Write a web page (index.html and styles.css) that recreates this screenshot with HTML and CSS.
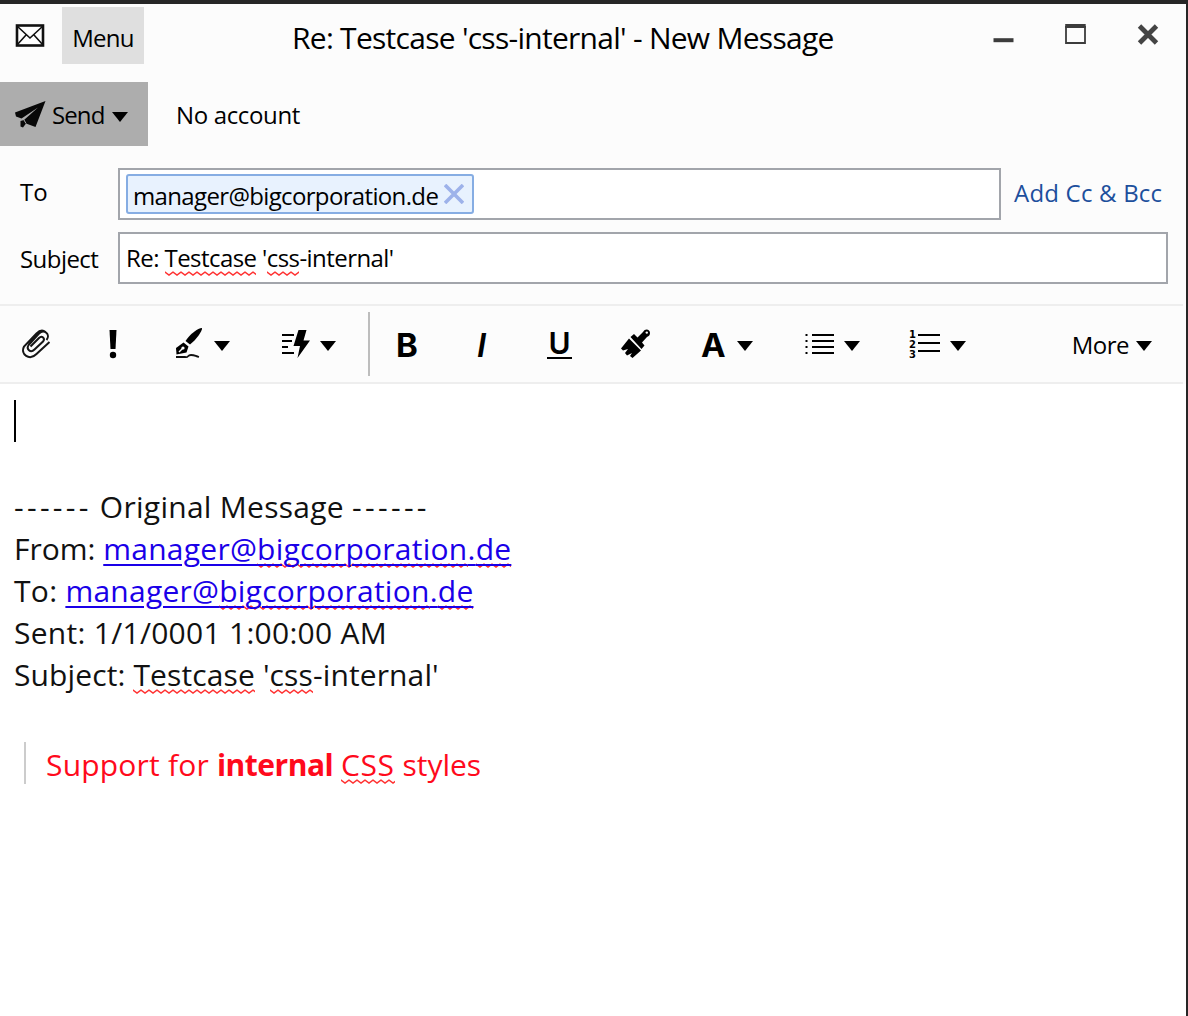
FILE: index.html
```html
<!DOCTYPE html>
<html lang="en">
<head>
<meta charset="utf-8">
<title>Re: Testcase 'css-internal' - New Message</title>
<link rel="stylesheet" href="styles.css">
</head>
<body>
<div class="window">
  <header class="titlebar">
    <svg class="mail-icon" viewBox="0 0 30 24" width="30" height="24"><rect x="2" y="1.500" width="26" height="20" fill="#fff" stroke="#111" stroke-width="2.6"/><path d="M2 2l13 12L28 2M2 21l9-10M28 21l-9-10" fill="none" stroke="#111" stroke-width="1.6"/></svg>
    <button class="menu-button"><span class="t t-menu">Menu</span></button>
    <h1 class="title"><span class="t t-title">Re: Testcase 'css-internal' - New Message</span></h1>
    <div class="controls">
      <svg width="22" height="24" viewBox="0 0 22 24"><path d="M0.500 15.200h20v4H.5z" fill="#3c3c3c"/></svg>
      <svg width="22" height="24" viewBox="0 0 22 24"><path d="M1 3v17h19V3" fill="none" stroke="#3c3c3c" stroke-width="1.800"/><path d="M0.200 1h20.500v4H.2z" fill="#3c3c3c"/></svg>
      <svg width="22" height="24" viewBox="0 0 22 24"><path d="M2.500 3l17 17M19.500 3l-17 17" stroke="#444" stroke-width="4.800"/></svg>
    </div>
  </header>

  <div class="actions">
    <button class="send-button">
      <svg width="31" height="27" viewBox="0 0 31 27"><path d="M30.500 0L0 11.500l1 4 5.500 2L23 6.500 9 19l-3.500 1v5.500l2.500 1 3-4 9.500 3.500z" fill="#080808"/><path d="M9 19l2 3.500" stroke="#adadad"/></svg>
      <span class="t t-send">Send</span>
      <svg class="caret" width="16" height="10" viewBox="0 0 16 10"><path d="M0 0h16L8 10z"/></svg>
    </button>
    <span class="t t-account">No account</span>
  </div>

  <form class="fields">
    <label class="label"><span class="t t-to">To</span></label>
    <div class="to-row">
      <div class="field field-to">
        <span class="chip"><span class="t t-chip">manager@bigcorporation.de</span><svg width="20" height="20" viewBox="0 0 20 20"><path d="M1 1l18 18M19 1L1 19" stroke="#9db2ea" stroke-width="3.600"/></svg></span>
      </div>
      <a class="add-cc"><span class="t t-cc">Add Cc &amp; Bcc</span></a>
    </div>
    <label class="label label-subject"><span class="t t-subject">Subject</span></label>
    <div class="field field-subject"><span class="t t-value">Re: <span class="sp sp-tight">Testcase</span> '<span class="sp">css</span>-internal'</span></div>
  </form>

  <nav class="toolbar">
    <span class="tool"><svg width="29" height="30" viewBox="0 0 29 30"><path d="M8.500 17.500L17 9c3-3 6.500.5 4 3.500L12.500 20.500c-4 4-9-.5-5.500-5L17 4.500c5-5 12 1 7.500 6.500M27.500 13L14.500 25C7.500 32-2 25.500 2 17.500L14.500 4.500c3-3 6.500-3.500 9-1.500" fill="none" stroke="#161616" stroke-width="2"/></svg></span>
    <span class="tool"><svg width="17" height="30" viewBox="0 0 17 30"><path d="M4.500 1h7L10.500 20h-5z"/><circle cx="8" cy="26" r="3.200"/></svg></span>
    <span class="tool tool-pen"><svg width="29" height="32" viewBox="0 0 29 32"><path d="M27 0c.5 3-6 12-12 16.500L10.500 13C15 6 23 0 27 0z"/><path d="M8.500 14.500l5 4-2 6-10 2L1 20z"/><path d="M4 24l4-4" stroke="#fcfcfc" stroke-width="1.500"/><circle cx="8" cy="20" r="1.600" fill="#fcfcfc"/><path d="M1 29h9c4 .8 2-2 6-2s4 1 8 2" fill="none" stroke="#111" stroke-width="1.800"/></svg><svg class="caret" width="16" height="10" viewBox="0 0 16 10"><path d="M0 0h16L8 10z"/></svg></span>
    <span class="tool"><svg width="29" height="30" viewBox="0 0 29 30"><path d="M1 6h12M1 12h10M1 18h6M1 24h12" stroke="#000" stroke-width="2.200"/><path d="M17.500 1h8l-3 10.500H29L16.500 29l2.500-12h-6.500z"/></svg><svg class="caret" width="16" height="10" viewBox="0 0 16 10"><path d="M0 0h16L8 10z"/></svg></span>
    <span class="separator"></span>
    <span class="tool glyph bold">B</span>
    <span class="tool glyph italic">I</span>
    <span class="tool glyph"><span class="underlined">U</span></span>
    <span class="tool"><svg width="30" height="30" viewBox="0 0 30 30"><path d="M9.500 8l3.500-3 3.500 3.500L22 3c2-4 7-3 7 1 0 2-1 3-3 4l-5 5.500 2.500 3L20.500 20z"/><path d="M8 9.500l12 12L11.500 29 9 27l2-3-5 2.500L4 24l3-4-5 1.500L0 19.500z"/><circle cx="25.800" cy="3.600" r="1.200" fill="#fcfcfc"/></svg></span>
    <span class="tool glyph color"><span class="letter">A</span><svg class="caret" width="16" height="10" viewBox="0 0 16 10"><path d="M0 0h16L8 10z"/></svg></span>
    <span class="tool"><svg width="29" height="30" viewBox="0 0 29 30"><path d="M7 6h22M7 12h22M7 18h22M7 24h22" stroke="#000" stroke-width="2.200"/><path d="M.5 6h2M.5 12h2M.5 18h2M.5 24h2" stroke="#000" stroke-width="2.200"/></svg><svg class="caret" width="16" height="10" viewBox="0 0 16 10"><path d="M0 0h16L8 10z"/></svg></span>
    <span class="tool"><svg class="numbers" width="31" height="30" viewBox="0 0 31 30"><text x="0" y="9">1</text><text x="0" y="19">2</text><text x="0" y="29">3</text><path d="M9 6h22M9 14h22M9 22h22" stroke="#000" stroke-width="2.200"/></svg><svg class="caret" width="16" height="10" viewBox="0 0 16 10"><path d="M0 0h16L8 10z"/></svg></span>
    <span class="tool more"><span class="t t-more">More</span><svg class="caret" width="16" height="10" viewBox="0 0 16 10"><path d="M0 0h16L8 10z"/></svg></span>
  </nav>

  <main class="editor">
    <div class="cursor-line"><span class="cursor"></span></div>
    <div class="line"></div>
    <div class="line"><span class="dashes">------</span><span class="origin"> Original Message </span><span class="dashes">------</span></div>
    <div class="line">From: <a class="address">manager@<span class="sp">bigcorporation</span>.<span class="sp">de</span></a></div>
    <div class="line"><span class="wide">To: </span><a class="address">manager@<span class="sp">bigcorporation</span>.<span class="sp">de</span></a></div>
    <div class="line wide">Sent: 1/1/0001 1:00:00 AM</div>
    <div class="line subject-line">Subject: <span class="sp">Testcase</span> '<span class="sp">css</span>-internal'</div>
    <blockquote class="quote"><span class="support">Support for </span><strong>internal</strong> <span class="sp caps">CSS</span> styles</blockquote>
  </main>
</div>
</body>
</html>
```
FILE: styles.css
```css
* { box-sizing: border-box; }
body {
  margin: 0;
  background: #262626;
  font-family: "Open Sans", "Noto Sans", sans-serif;
  font-size: 24px;
  color: #000;
}
button { border: 0; padding: 0; font: inherit; color: inherit; }
svg { display: block; flex: none; }
.t { white-space: pre; }
.t-menu { letter-spacing: -.7px; }
.t-title { letter-spacing: -.73px; }
.t-send { letter-spacing: -.9px; }
.t-account { letter-spacing: -.35px; }
.t-chip { letter-spacing: -.65px; }
.t-cc { letter-spacing: .2px; }
.t-subject { letter-spacing: -.55px; }
.t-value { letter-spacing: -.57px; }
.t-more { letter-spacing: -.5px; }

.window {
  height: 1016px;
  border-top: 4px solid #262626;
  border-right: 2px solid #262626;
  background: #fcfcfc;
  display: flex;
  flex-direction: column;
  overflow: hidden;
}

.titlebar {
  flex: none;
  height: 78px;
  padding: 3px 27px 0 15px;
  display: flex;
  align-items: flex-start;
}
.mail-icon { margin-top: 17px; }
.menu-button {
  width: 82px;
  height: 57px;
  margin-left: 17px;
  background: #dfdfdf;
  padding-top: 4px;
}
.title {
  flex: 1;
  margin: 0 0 0 148px;
  font-size: 30px;
  font-weight: 400;
  line-height: 62px;
}
.controls { display: flex; gap: 50px; padding-top: 16px; }

.actions { flex: none; height: 64px; display: flex; align-items: center; gap: 28px; }
.send-button {
  width: 148px;
  height: 64px;
  padding-left: 15px;
  background: #adadad;
  display: flex;
  align-items: center;
  gap: 6px;
}
.send-button .caret { margin: 5px 0 0 2px; }

.fields {
  flex: none;
  display: grid;
  grid-template-columns: 98px 1050px;
  grid-template-rows: 52px 52px;
  row-gap: 12px;
  padding: 22px 0 0 20px;
}
.label { line-height: 48px; }
.label-subject { line-height: 54px; }
.to-row { display: flex; align-items: center; gap: 13px; }
.field {
  height: 52px;
  background: #fff;
  border: 2px solid #a2a5ab;
  padding: 4px 6px;
}
.field-to { width: 883px; }
.field-subject { line-height: 40px; }
.field-subject .sp { padding-bottom: 3px; }
.chip {
  display: inline-flex;
  align-items: center;
  gap: 6px;
  width: 348px;
  height: 40px;
  padding: 2px 0 0 5px;
  background: #e8f2fe;
  border: 2px solid #86ade3;
  border-radius: 3px;
}
.chip svg { margin-top: -2px; }
.add-cc { color: #1d4f9c; padding-bottom: 3px; }

.toolbar {
  flex: none;
  height: 80px;
  margin: 20px 3px 0 0;
  padding-left: 22px;
  border-top: 2px solid #eee;
  border-bottom: 2px solid #eee;
  display: grid;
  grid-template-columns: 83px 70px 106px 87px 28px 80px 71px 74px 80px 104px 104px 1fr auto;
  align-items: center;
}
.tool { display: flex; align-items: center; gap: 10px; }
.tool .caret { margin-top: 4px; }
.more { gap: 7px; padding-right: 31px; }
.separator { width: 2px; height: 64px; background: #bdbdbd; }
.glyph { font-family: Inter, sans-serif; font-weight: 700; font-size: 33px; line-height: 40px; }
.bold { font-weight: 650; }
.italic { font-style: italic; font-weight: 600; padding-left: 1px; }
.bold, .italic, .letter { padding-top: 1px; }
.underlined { font-size: 30px; font-weight: 600; line-height: 27px; width: 25px; text-align: center; border-bottom: 2px solid #000; }
.letter { width: 26px; }
.numbers { font: 700 10px "DejaVu Sans", sans-serif; }

.editor {
  flex: 1;
  background: #fff;
  padding: 16px 0 0 14px;
  font-size: 30px;
  line-height: 42px;
  color: #111;
}
.cursor-line { height: 44px; }
.line { height: 42px; white-space: pre; }
.wide, .origin { letter-spacing: .28px; }
.dashes { letter-spacing: 3.3px; }
.subject-line { letter-spacing: .12px; }
.cursor { display: block; width: 2px; height: 42px; background: #000; }
.address { letter-spacing: .25px; color: #1a00e8; text-decoration: underline 2px; text-underline-offset: 4px; }
.sp {
  background: url("data:image/svg+xml,%3Csvg xmlns='http://www.w3.org/2000/svg' width='8' height='5'%3E%3Cpath d='M-1 0.200L0 1l4 3 4-3 1-.8' fill='none' stroke='%23f33' stroke-width='1.500'/%3E%3C/svg%3E") repeat-x 0 calc(100% - 1px);
}
.quote {
  margin: 46px 0 0 10px;
  padding-left: 20px;
  border-left: 2px solid #ccc;
  height: 42px;
  line-height: 46px;
  color: #ff0a1c;
  white-space: pre;
}
.support { letter-spacing: .2px; }
.quote strong { letter-spacing: -.5px; }
.caps { letter-spacing: .6px; }
```
